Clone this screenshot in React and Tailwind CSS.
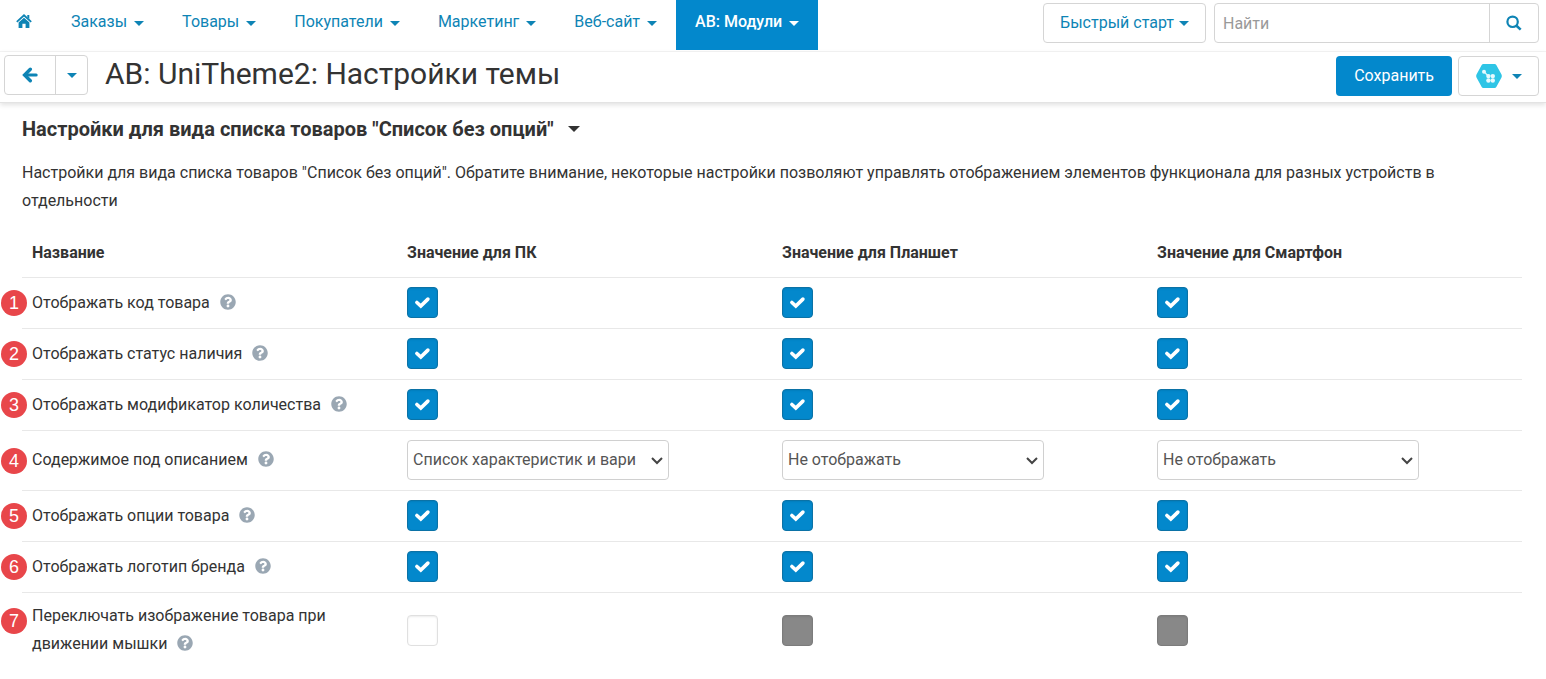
import { useState } from "react";
import { FaQuestionCircle } from "react-icons/fa";
import clsx from "clsx";

const menu = [
  { label: "Заказы" },
  { label: "Товары" },
  { label: "Покупатели" },
  { label: "Маркетинг" },
  { label: "Веб-сайт" },
  { label: "АВ: Модули", active: true },
];

const columns = ["Название", "Значение для ПК", "Значение для Планшет", "Значение для Смартфон"];

const rows = [
  { id: 1, label: "Отображать код товара", values: [true, true, true] },
  { id: 2, label: "Отображать статус наличия", values: [true, true, true] },
  { id: 3, label: "Отображать модификатор количества", values: [true, true, true] },
  {
    id: 4,
    label: "Содержимое под описанием",
    type: "select",
    values: ["Список характеристик и вари", "Не отображать", "Не отображать"],
  },
  { id: 5, label: "Отображать опции товара", values: [true, true, true] },
  { id: 6, label: "Отображать логотип бренда", values: [true, true, true] },
  {
    id: 7,
    label: "Переключать изображение товара при движении мышки",
    values: [false, null, null],
  },
];

const Caret = ({ className = "h-[5px] w-[10px]" }) => (
  <svg className={clsx("shrink-0", className)} viewBox="0 0 10 5" fill="currentColor" aria-hidden="true">
    <path d="M0 0h10L5 5z" />
  </svg>
);

const HomeIcon = () => (
  <svg className="h-4 w-4" viewBox="0 0 16 16" aria-hidden="true">
    <path d="M.8 8.800L8 2.300l7.200 6.500" fill="none" stroke="currentColor" strokeWidth="1.800" />
    <path d="M11.300 2h2v4l-2-1.800zM8 4.800l5.400 4.800V15H9.600v-4.200H6.400V15H2.600V9.600z" fill="currentColor" />
  </svg>
);

const BackIcon = () => (
  <svg className="h-4 w-4" viewBox="0 0 16 16" fill="none" stroke="currentColor" strokeLinecap="round" aria-hidden="true">
    <path d="M3 8h11.200" strokeWidth="3" />
    <path d="M8.300 2.300L2.600 8l5.700 5.700" strokeWidth="3.400" />
  </svg>
);

const SearchIcon = () => (
  <svg className="h-4 w-4" viewBox="0 0 16 16" fill="none" stroke="currentColor" aria-hidden="true">
    <circle cx="6.600" cy="6.800" r="5.200" strokeWidth="2.200" />
    <path d="M10.500 10.800l4.200 3.800" strokeWidth="2.600" />
  </svg>
);

const AddonIcon = () => (
  <svg className="h-[26px] w-7" viewBox="0 0 28 26" aria-hidden="true">
    <path
      d="M8.500 1h11a2 2 0 0 1 1.800 1l5.200 9.600a3 3 0 0 1 0 2.800L21.300 24a2 2 0 0 1-1.800 1h-11a2 2 0 0 1-1.800-1L1.500 14.400a3 3 0 0 1 0-2.800L6.700 2a2 2 0 0 1 1.800-1z"
      fill="#2ec5e6"
    />
    <path d="M9 8.800l4 4" stroke="#d5f6fd" strokeWidth="1.300" />
    <g fill="#e6fafe">
      <circle cx="9" cy="8.800" r="2" />
      <circle cx="13.400" cy="13.100" r="2.200" />
      <circle cx="17.800" cy="13.100" r="2.200" />
      <circle cx="13.400" cy="17.500" r="2.200" />
      <circle cx="17.800" cy="17.500" r="2.200" />
    </g>
  </svg>
);

const Navbar = () => (
  <nav className="flex items-start justify-between border-b border-[#f5f5f5] pr-[7px] text-base text-[#0e84b5]">
    <div className="flex">
      <a href="#" aria-label="Главная" className="flex h-[50px] items-center pr-5 pb-2 pl-4">
        <HomeIcon />
      </a>
      {menu.map(({ label, active }) => (
        <a
          key={label}
          href="#"
          className={clsx(
            "flex h-[50px] items-center gap-[7px] px-[19px] pb-[6px]",
            active && "bg-[#0388cc] font-medium text-white"
          )}
        >
          {label}
          <Caret className="mt-[2px] h-[5px] w-[10px]" />
        </a>
      ))}
    </div>

    <div className="flex gap-2 pt-[3px] pb-2">
      <button className="flex h-10 items-center gap-[5px] rounded border border-[#d5d5d5] px-4">
        Быстрый старт
        <Caret />
      </button>
      <form className="flex h-10 rounded border border-[#d5d5d5]">
        <input
          type="text"
          aria-label="Найти"
          placeholder="Найти"
          className="w-[274px] px-2 pt-px outline-none placeholder:text-[#999]"
        />
        <button type="button" aria-label="Искать" className="flex w-[49px] items-center justify-center border-l border-[#d5d5d5]">
          <SearchIcon />
        </button>
      </form>
    </div>
  </nav>
);

const ActionsBar = () => (
  <header className="flex items-start justify-between border-b border-[#e3e3e3] pr-[7px] pb-[6px] pl-1 shadow-[0_2px_5px_rgba(0,0,0,0.12)]">
    <div className="flex items-start pt-[3px] text-[#0e84b5]">
      <div className="flex h-10 rounded border border-[#d5d5d5]">
        <button aria-label="Назад" className="flex w-[50px] items-center justify-center">
          <BackIcon />
        </button>
        <button aria-label="Недавние страницы" className="flex w-8 items-center justify-center border-l border-[#d5d5d5]">
          <Caret />
        </button>
      </div>
      <h1 className="ml-[17px] text-[30px] leading-[38px] font-normal text-[#333]">AB: UniTheme2: Настройки темы</h1>
    </div>
    <div className="flex gap-[6px] pt-1">
      <button className="h-10 rounded bg-[#0388cc] px-[18px] text-base text-white">Сохранить</button>
      <button
        aria-label="Модуль"
        className="flex h-10 items-center gap-[9px] rounded border border-[#d5d5d5] px-4 text-[#0e84b5]"
      >
        <AddonIcon />
        <Caret />
      </button>
    </div>
  </header>
);

const Checkbox = ({ label, value }) => {
  const [checked, setChecked] = useState(Boolean(value));

  return (
    <span className="relative block h-[31px] w-[31px]">
      <input
        type="checkbox"
        aria-label={label}
        checked={checked}
        disabled={value === null}
        onChange={(e) => setChecked(e.target.checked)}
        className="peer block h-full w-full appearance-none rounded border border-[#e0e0e0] bg-white shadow-[inset_0_1px_2px_rgba(0,0,0,0.08)] checked:border-[#0b72a6] checked:bg-[#0388cc] disabled:border-[#7c7c7c] disabled:bg-[#888]"
      />
      <svg
        className="pointer-events-none absolute inset-0 hidden peer-checked:block"
        viewBox="0 0 31 31"
        fill="none"
        stroke="#fff"
        strokeWidth="3.600"
        strokeLinecap="round"
        aria-hidden="true"
      >
        <path d="M9.900 15.500l3.900 3.600 7.100-7" />
      </svg>
    </span>
  );
};

const Select = ({ label, value }) => (
  <span className="relative block w-[262px]">
    <select
      aria-label={label}
      defaultValue={value}
      className="block h-10 w-full appearance-none rounded border border-[#d0d0d0] bg-white px-[5px] text-base text-[#555]"
    >
      <option>{value}</option>
    </select>
    <svg
      className="pointer-events-none absolute inset-y-0 right-[6px] my-auto h-3 w-3"
      viewBox="0 0 12 12"
      fill="none"
      stroke="#444"
      strokeWidth="2"
      aria-hidden="true"
    >
      <path d="M1 4l5 5 5-5" />
    </svg>
  </span>
);

const SettingRow = ({ id, label, type, values }) => {
  const Field = type === "select" ? Select : Checkbox;

  return (
    <tr className="border-b border-[#e8e8e8] last:border-0">
      <th scope="row" className="relative px-[10px] pt-[9px] pb-[10px] text-left font-normal">
        <span
          className={clsx(
            "absolute -left-[21px] flex h-[26px] w-[26px] items-center justify-center rounded-full bg-[#e8464a] font-['Liberation_Sans',sans-serif] text-lg leading-none text-white",
            id === 7 ? "top-[15px]" : "inset-y-0 my-auto"
          )}
        >
          {id}
        </span>
        <span className="block max-w-[320px] leading-7">
          {label}
          <FaQuestionCircle className="mb-[3px] ml-[10px] inline h-4 w-4 text-[#9aa7b3]" />
        </span>
      </th>
      {values.map((value, i) => (
        <td key={columns[i + 1]} className="px-[10px] pt-[9px] pb-[10px]">
          <Field label={`${label}: ${columns[i + 1]}`} value={value} />
        </td>
      ))}
    </tr>
  );
};

export default function App() {
  return (
    <div className="bg-white font-[Roboto,sans-serif] text-base text-[#333]">
      <Navbar />
      <ActionsBar />

      <main className="pt-3 pr-6 pb-2 pl-[22px]">
        <h2 className="flex items-center gap-[14px] text-xl leading-7 font-bold">
          Настройки для вида списка товаров "Список без опций"
          <Caret className="h-[6px] w-3" />
        </h2>
        <p className="mt-4 leading-7">
          Настройки для вида списка товаров "Список без опций". Обратите внимание, некоторые настройки позволяют
          управлять отображением элементов функционала для разных устройств в отдельности
        </p>

        <table className="mt-[14px] w-full table-fixed border-collapse">
          <thead>
            <tr className="border-b border-[#e8e8e8]">
              {columns.map((title) => (
                <th key={title} scope="col" className="px-[10px] py-[10px] text-left leading-7 font-bold">
                  {title}
                </th>
              ))}
            </tr>
          </thead>
          <tbody>
            {rows.map((row) => (
              <SettingRow key={row.id} {...row} />
            ))}
          </tbody>
        </table>
      </main>
    </div>
  );
}
